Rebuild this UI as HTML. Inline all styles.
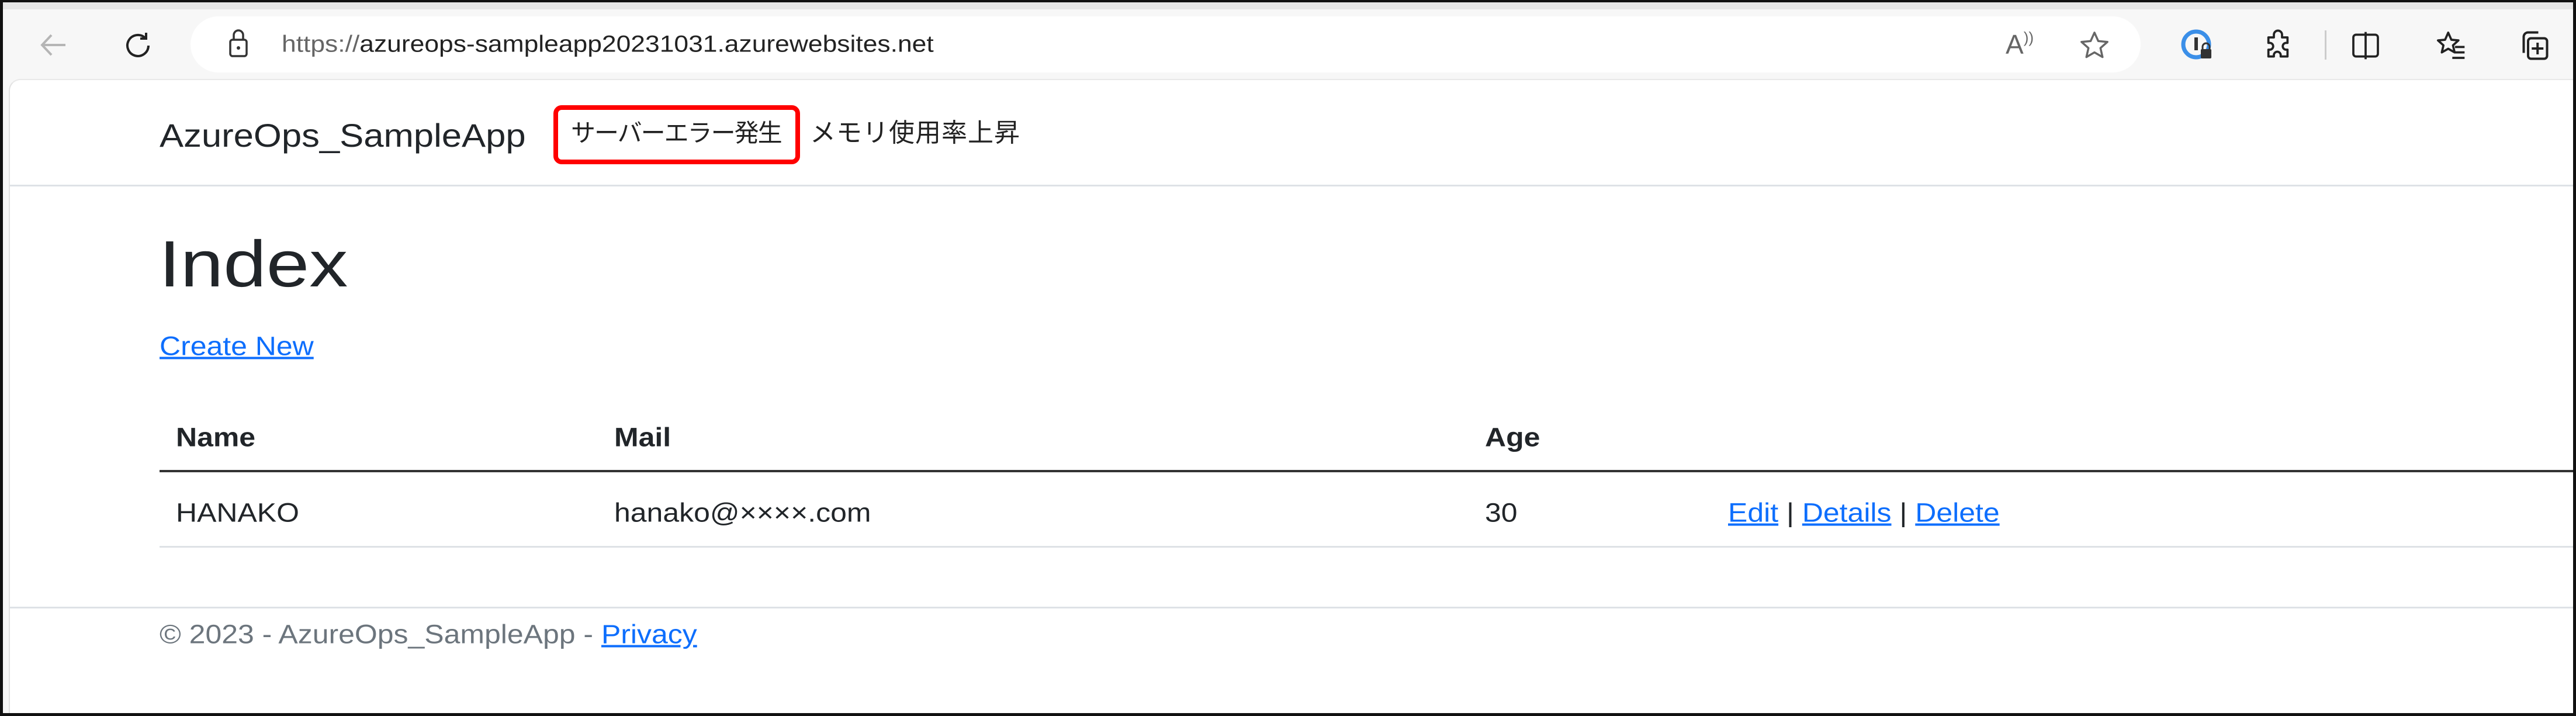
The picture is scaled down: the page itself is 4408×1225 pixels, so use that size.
<!DOCTYPE html>
<html><head><meta charset="utf-8"><style>
*{margin:0;padding:0;box-sizing:border-box}
body{width:4408px;height:1225px;overflow:hidden;background:#f7f7f7;font-family:"Liberation Sans","Noto Sans CJK JP",sans-serif;color:#212529;position:relative}
.abs{position:absolute;white-space:nowrap}
.frame{position:absolute;left:0;top:0;width:4408px;height:1225px;border:5px solid #111;border-top-width:4px;pointer-events:none}
.tabs{position:absolute;left:0;top:0;width:4408px;height:16px;background:#e6e6e6}
.url{position:absolute;left:326px;top:28px;width:3337px;height:96px;background:#fff;border-radius:48px}
.content{position:absolute;left:15px;top:135px;width:4400px;height:1090px;background:#fff;border-top-left-radius:20px;border-left:2px solid #e2e2e2;border-top:2px solid #e8e8e8}
.hl{position:absolute;height:3px;background:#dee2e6}
a{color:#0d6efd;text-decoration:underline}
.t{font-size:45px;line-height:1;transform:translateY(-50%) scaleX(1.11);transform-origin:left center}
.b{font-weight:bold}
.jp{font-size:42px;line-height:1;transform:translateY(-50%);color:#222}
svg{position:absolute}
</style></head><body>
<div class="tabs"></div>
<div class="url"></div>
<svg style="left:62px;top:52px" width="60" height="50" viewBox="0 0 60 50"><path d="M50 25H10M26 8L10 25l16 17" stroke="#b5b5b5" stroke-width="4" fill="none"/></svg>
<svg style="left:208px;top:50px" width="56" height="56" viewBox="0 0 56 56"><path d="M46 28a18 18 0 1 1-6-13.5M42 6v10H32" stroke="#222" stroke-width="4" fill="none"/></svg>
<svg style="left:390px;top:46px" width="36" height="56" viewBox="0 0 36 56"><rect x="4" y="22" width="28" height="28" rx="4" stroke="#333" stroke-width="3.5" fill="none"/><path d="M10 22V14a8 8 0 0 1 16 0v8" stroke="#333" stroke-width="3.5" fill="none"/><circle cx="18" cy="36" r="3" fill="#333"/></svg>
<div class="abs" style="left:482px;top:76px;font-size:40px;transform:translateY(-50%) scaleX(1.11);transform-origin:left center;color:#222"><span style="color:#666">https://</span>azureops-sampleapp20231031.azurewebsites.net</div>
<div class="abs" style="left:3432px;top:76px;font-size:46px;color:#666;transform:translateY(-50%)">A<span style="font-size:26px;vertical-align:top">))</span></div>
<svg style="left:3556px;top:50px" width="56" height="56" viewBox="0 0 24 24"><path d="M12 2.5l2.8 6.2 6.7.6-5.1 4.5 1.5 6.6L12 17l-5.9 3.4 1.5-6.6L2.5 9.3l6.7-.6z" stroke="#666" stroke-width="1.5" fill="none" stroke-linejoin="round"/></svg>
<svg style="left:3730px;top:48px" width="60" height="60" viewBox="0 0 60 60"><circle cx="28" cy="28" r="22" stroke="#3b8fe8" stroke-width="7" fill="none"/><rect x="25" y="16" width="6" height="22" fill="#333"/><rect x="36" y="36" width="18" height="16" rx="2" fill="#333"/><path d="M39 36v-4a6 6 0 0 1 12 0v4" stroke="#333" stroke-width="3" fill="none"/></svg>
<svg style="left:3870px;top:50px" width="56" height="56" viewBox="0 0 24 24"><path d="M9 4a3 3 0 0 1 6 0v2h4v4h-1a2.5 2.5 0 0 0 0 5h1v5h-5v-1a2.5 2.5 0 0 0-5 0v1H5v-5h1a2.5 2.5 0 0 0 0-5H5V6h4z" stroke="#222" stroke-width="1.6" fill="none" stroke-linejoin="round"/></svg>
<div class="abs" style="left:3978px;top:52px;width:3px;height:50px;background:#ccc"></div>
<svg style="left:4020px;top:50px" width="56" height="56" viewBox="0 0 24 24"><rect x="3" y="4" width="18" height="16" rx="2" stroke="#222" stroke-width="1.6" fill="none"/><path d="M12 2v20" stroke="#222" stroke-width="1.6"/></svg>
<svg style="left:4166px;top:50px" width="56" height="56" viewBox="0 0 24 24"><path d="M10 2.5l2.3 5.2 5.2.5-4 3.6 1.2 5.2L10 14.3l-4.7 2.7 1.2-5.2-4-3.6 5.2-.5z" stroke="#222" stroke-width="1.6" fill="none" stroke-linejoin="round"/><path d="M15 13h7M15 17h7M13 21h9" stroke="#222" stroke-width="1.6"/></svg>
<svg style="left:4306px;top:48px" width="60" height="60" viewBox="0 0 24 24"><path d="M5 17V6a3 3 0 0 1 3-3h7" stroke="#222" stroke-width="1.6" fill="none"/><rect x="8" y="7" width="13" height="14" rx="2" stroke="#222" stroke-width="1.6" fill="none"/><path d="M14.5 10v8M10.5 14h8" stroke="#222" stroke-width="1.6"/></svg>

<div class="content"></div>
<div class="abs" style="left:273px;top:232px;font-size:56px;line-height:1;transform:translateY(-50%) scaleX(1.1);transform-origin:left center">AzureOps_SampleApp</div>
<div class="abs" style="left:947px;top:180px;width:422px;height:101px;border:8px solid #f00;border-radius:14px"></div>
<div class="abs jp" style="left:977px;top:228px;letter-spacing:-2px">サーバーエラー発生</div>
<div class="abs jp" style="left:1386px;top:228px;font-size:44px;letter-spacing:1px">メモリ使用率上昇</div>
<div class="hl" style="left:17px;top:316px;width:4391px"></div>
<div class="abs" style="left:272px;top:452px;font-size:112px;line-height:1;transform:translateY(-50%) scaleX(1.18);transform-origin:left center">Index</div>
<div class="abs t" style="left:273px;top:592px"><a>Create New</a></div>
<div class="abs t b" style="left:301px;top:748px">Name</div>
<div class="abs t b" style="left:1051px;top:748px">Mail</div>
<div class="abs t b" style="left:2541px;top:748px">Age</div>
<div class="abs" style="left:273px;top:804px;width:4135px;height:4px;background:#333"></div>
<div class="abs t" style="left:301px;top:877px">HANAKO</div>
<div class="abs t" style="left:1051px;top:877px">hanako@××××.com</div>
<div class="abs t" style="left:2541px;top:877px">30</div>
<div class="abs t" style="left:2957px;top:877px"><a>Edit</a> | <a>Details</a> | <a>Delete</a></div>
<div class="hl" style="left:273px;top:934px;width:4135px"></div>
<div class="hl" style="left:17px;top:1038px;width:4391px"></div>
<div class="abs t" style="left:273px;top:1085px;color:#6c757d">© 2023 - AzureOps_SampleApp - <a>Privacy</a></div>
<div class="frame"></div>
</body></html>
